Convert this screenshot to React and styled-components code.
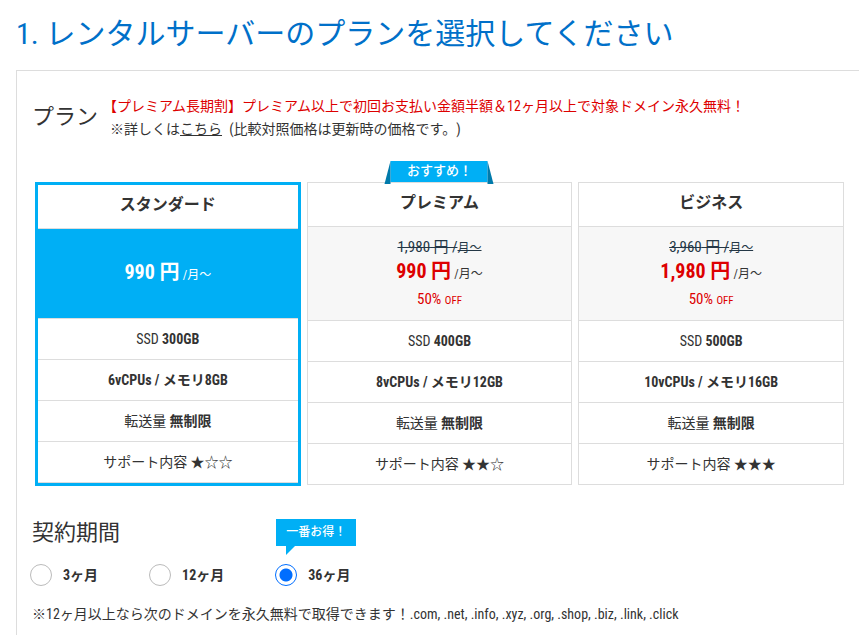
import React, { useState } from "react";
import styled, { createGlobalStyle, css } from "styled-components";

const GlobalStyle = createGlobalStyle`
  * { box-sizing: border-box; }
  body {
    margin: 0;
    background: #fff;
    color: #333;
    font-family: "Roboto Condensed", "Liberation Sans Narrow", "Noto Sans CJK JP", sans-serif;
    font-size: 14px;
    line-height: 20px;
    overflow-x: hidden;
  }
`;

const Page = styled.main`
  padding: 14px 0 0 16px;
`;

const Title = styled.h1`
  margin: 0 0 16px;
  color: #0070c9;
  font-size: 30px;
  font-weight: 400;
  line-height: 40px;
`;

const Panel = styled.section`
  border: solid #ddd;
  border-width: 1px 0 0 1px;
  padding: 24px 15px 12px 18px;
`;

const PlanHead = styled.header`
  display: flex;
  align-items: flex-start;
  gap: 12px;
  margin-bottom: 41px;
`;

const SectionTitle = styled.h2`
  flex: none;
  margin: 0;
  font-size: 22px;
  font-weight: 400;
  line-height: 32px;
`;

const PlanTitle = styled(SectionTitle)`
  padding-top: 6px;
  margin-left: -3px;
`;

const Notes = styled.div`
  line-height: 23px;
`;

const Campaign = styled.p`
  margin: 0;
  color: #d00;
  text-spacing-trim: trim-start;
`;

const Detail = styled.p`
  margin: 0;
  text-spacing-trim: space-all;
`;

const DetailLink = styled.a`
  color: inherit;
  margin-right: 4px;
`;

const PlanGrid = styled.div`
  display: grid;
  grid-template-columns: repeat(3, 1fr);
  align-items: start;
  gap: 6px;
`;

const HiddenRadio = styled.input`
  position: absolute;
  width: 1px;
  height: 1px;
  margin: 0;
  opacity: 0;
`;

const Row = styled.span`
  display: block;
  padding: 10px 0;
  border-bottom: 1px solid #ddd;
`;

const PlanName = styled(Row)`
  padding: 8px 0 11px;
  font-size: 16px;
  font-weight: 700;
  line-height: 24px;
`;

const PriceBox = styled.span`
  display: flex;
  flex-direction: column;
  align-items: center;
  justify-content: center;
  min-height: 90px;
  border-bottom: 1px solid #ddd;
  background: ${(p) => (p.$selected ? "#00aff5" : "#f7f7f7")};
  color: ${(p) => (p.$selected ? "#fff" : "#333")};
  padding: ${(p) => (p.$selected ? "0" : "8px 0 9px")};
`;

const PlanCard = styled.label`
  position: relative;
  display: block;
  border: 1px solid #ddd;
  text-align: center;
  cursor: pointer;
  ${(p) =>
    p.$selected
      ? css`
          border: 3px solid #00aff5;
        `
      : css`
          & > ${Row}:last-child {
            border-bottom: 0;
          }
        `}
`;

const OldPrice = styled.s`
  color: #243746;
  font-size: 15px;
  line-height: 24px;
`;

const Price = styled.span`
  line-height: 28px;
`;

const Amount = styled.b`
  color: ${(p) => (p.$sale ? "#d00" : "inherit")};
  font-size: 20px;
  line-height: 1;
`;

const Unit = styled.span`
  font-size: 12px;
  line-height: 1;
`;

const Discount = styled.span`
  color: #d00;
  font-size: 15px;
  line-height: 24px;
`;

const Off = styled.small`
  font-size: 11px;
  line-height: 1;
`;

const Ribbon = styled.span`
  position: absolute;
  top: -22px;
  left: 50%;
  width: 97px;
  height: 21px;
  transform: translateX(-50%);
  background: #00aff5;
  color: #fff;
  font-size: 13px;
  font-weight: 500;
  line-height: 20px;
  &::before,
  &::after {
    content: "";
    position: absolute;
    top: 0;
    border: solid transparent;
    border-bottom-color: #007aab;
  }
  &::before {
    right: 100%;
    border-width: 0 0 23px 6px;
  }
  &::after {
    left: 100%;
    border-width: 0 6px 23px 0;
  }
`;

const Term = styled.fieldset`
  margin: 31px 0 0 -5px;
  border: 0;
  padding: 0;
  min-width: 0;
`;

const TermTitle = styled.legend`
  padding: 0 0 0 2px;
  font-size: 22px;
  line-height: 32px;
`;

const TermList = styled.div`
  display: flex;
  gap: 51px;
  margin-top: 15px;
`;

const TermOption = styled.label`
  position: relative;
  display: flex;
  align-items: center;
  gap: 11px;
  height: 22px;
  font-weight: 700;
  cursor: pointer;
`;

const Radio = styled.input`
  appearance: none;
  flex: none;
  width: 22px;
  height: 22px;
  margin: 0;
  border: 1px solid #bbb;
  border-radius: 50%;
  background: #fff;
  &:checked {
    border-color: #006eff;
    background: radial-gradient(circle, #006eff 0 6px, #fff 7px);
  }
`;

const Balloon = styled.span`
  position: absolute;
  bottom: 40px;
  left: 1px;
  padding: 0 10px;
  background: #00aff5;
  color: #fff;
  font-size: 12px;
  font-weight: 500;
  line-height: 27px;
  white-space: nowrap;
  &::after {
    content: "";
    position: absolute;
    top: 100%;
    left: 10px;
    border: solid transparent;
    border-width: 0 9px 9px 0;
    border-top: 9px solid #00aff5;
    border-bottom-width: 0;
  }
`;

const DomainNote = styled.p`
  margin: 18px 0 0 -3px;
`;

const PLANS = [
  { id: "standard", name: "スタンダード", price: "990", ssd: "300GB", spec: "6vCPUs / メモリ8GB", stars: "★☆☆" },
  { id: "premium", name: "プレミアム", old: "1,980", price: "990", ssd: "400GB", spec: "8vCPUs / メモリ12GB", stars: "★★☆", ribbon: "おすすめ！" },
  { id: "business", name: "ビジネス", old: "3,960", price: "1,980", ssd: "500GB", spec: "10vCPUs / メモリ16GB", stars: "★★★" },
];

const TERMS = [
  { months: 3 },
  { months: 12 },
  { months: 36, balloon: "一番お得！" },
];

function Plan({ plan, selected, onSelect }) {
  return (
    <PlanCard $selected={selected}>
      <HiddenRadio type="radio" name="plan" value={plan.id} checked={selected} onChange={onSelect} />
      {plan.ribbon && <Ribbon>{plan.ribbon}</Ribbon>}
      <PlanName>{plan.name}</PlanName>
      <PriceBox $selected={selected}>
        {plan.old && (
          <OldPrice>
            {plan.old} 円 /<Unit>月〜</Unit>
          </OldPrice>
        )}
        <Price>
          <Amount $sale={Boolean(plan.old)}>{plan.price} 円</Amount> <Unit>/月〜</Unit>
        </Price>
        {plan.old && (
          <Discount>
            50% <Off>OFF</Off>
          </Discount>
        )}
      </PriceBox>
      <Row>SSD <b>{plan.ssd}</b></Row>
      <Row><b>{plan.spec}</b></Row>
      <Row>転送量 <b>無制限</b></Row>
      <Row>サポート内容 {plan.stars}</Row>
    </PlanCard>
  );
}

export default function App() {
  const [plan, setPlan] = useState("standard");
  const [months, setMonths] = useState(36);
  return (
    <>
      <GlobalStyle />
      <Page lang="ja">
        <Title>1. レンタルサーバーのプランを選択してください</Title>
        <Panel>
          <PlanHead>
            <PlanTitle>プラン</PlanTitle>
            <Notes>
              <Campaign>【プレミアム長期割】プレミアム以上で初回お支払い金額半額＆12ヶ月以上で対象ドメイン永久無料！</Campaign>
              <Detail>
                ※詳しくは<DetailLink href="#detail">こちら</DetailLink> (比較対照価格は更新時の価格です。)
              </Detail>
            </Notes>
          </PlanHead>
          <PlanGrid>
            {PLANS.map((p) => (
              <Plan key={p.id} plan={p} selected={plan === p.id} onSelect={() => setPlan(p.id)} />
            ))}
          </PlanGrid>
          <Term>
            <TermTitle>契約期間</TermTitle>
            <TermList>
              {TERMS.map((t) => (
                <TermOption key={t.months}>
                  <Radio type="radio" name="term" checked={months === t.months} onChange={() => setMonths(t.months)} />
                  {t.months}ヶ月
                  {t.balloon && <Balloon>{t.balloon}</Balloon>}
                </TermOption>
              ))}
            </TermList>
          </Term>
          <DomainNote>
            ※12ヶ月以上なら次のドメインを永久無料で取得できます！.com, .net, .info, .xyz, .org, .shop, .biz, .link, .click
          </DomainNote>
        </Panel>
      </Page>
    </>
  );
}
